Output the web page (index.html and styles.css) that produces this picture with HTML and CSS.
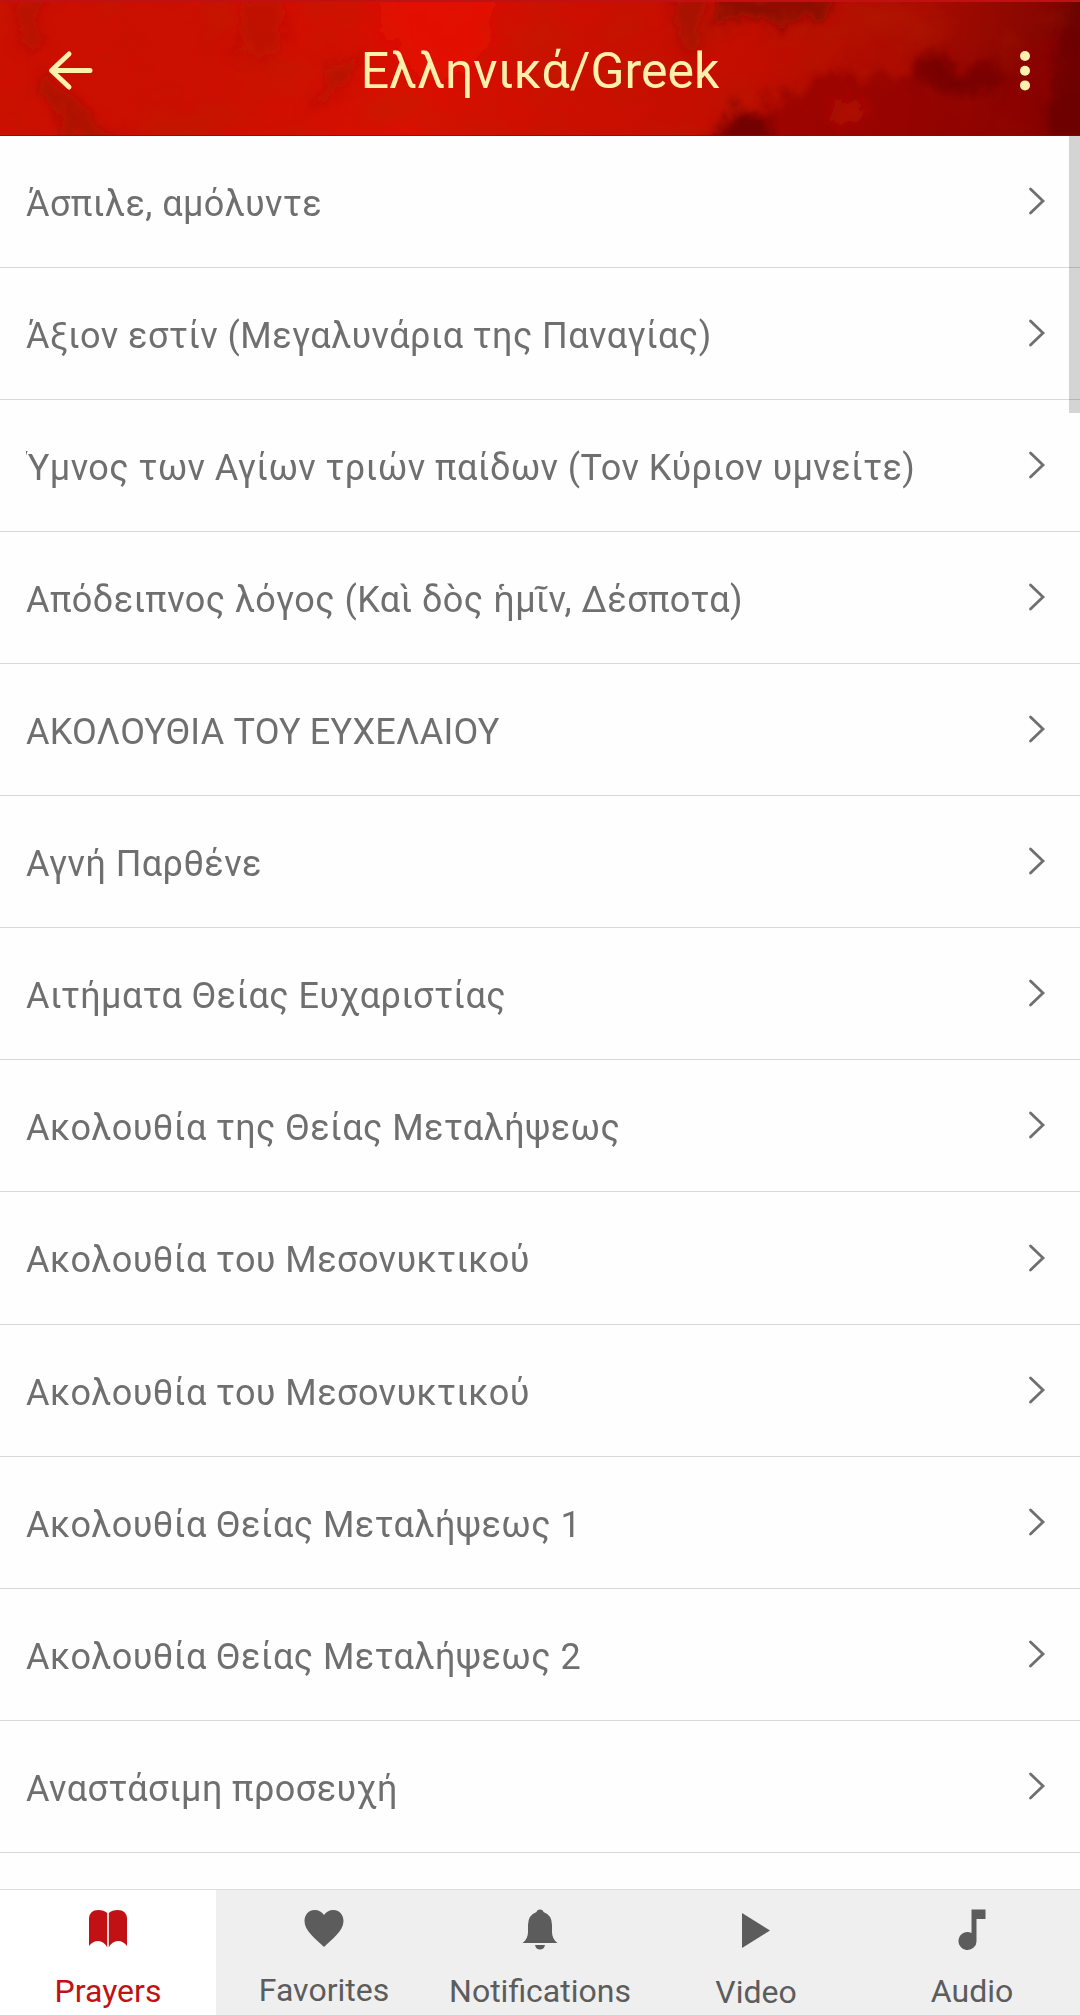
FILE: index.html
```html
<!DOCTYPE html>
<html lang="el">
<head>
<meta charset="utf-8">
<title>Ελληνικά/Greek</title>
<link rel="stylesheet" href="styles.css">
</head>
<body>
<div class="app">
  <header class="topbar">
    <svg class="topbar-texture" viewBox="0 0 1080 136" preserveAspectRatio="none" aria-hidden="true">
      <defs>
        <linearGradient id="base" x1="0" x2="1" y1="0" y2="0.02">
          <stop offset="0" stop-color="#cc0f00"/>
          <stop offset="0.2" stop-color="#cb0f00"/>
          <stop offset="0.4" stop-color="#d81000"/>
          <stop offset="0.52" stop-color="#cd0f00"/>
          <stop offset="0.7" stop-color="#c20e00"/>
          <stop offset="0.85" stop-color="#aa0b00"/>
          <stop offset="1" stop-color="#7c0600"/>
        </linearGradient>
        <filter id="paint" x="-10%" y="-30%" width="120%" height="160%">
          <feTurbulence type="fractalNoise" baseFrequency="0.035 0.03" numOctaves="4" seed="8" result="n"/>
          <feGaussianBlur in="SourceGraphic" stdDeviation="7" result="b"/>
          <feDisplacementMap in="b" in2="n" scale="36" xChannelSelector="R" yChannelSelector="G"/>
        </filter>
        <filter id="mottle" x="0" y="0" width="100%" height="100%">
          <feTurbulence type="fractalNoise" baseFrequency="0.014 0.02" numOctaves="4" seed="21"/>
          <feColorMatrix values="0 0 0 0 0.45  0 0 0 0 0.02  0 0 0 0 0  1.6 0 0 0 -0.72"/>
        </filter>
      </defs>
      <rect width="1080" height="136" fill="url(#base)"/>
      <rect width="1080" height="136" filter="url(#mottle)" opacity="0.5"/>
      <g filter="url(#paint)">
        <path d="M375 -10H505L480 60 440 80 400 50Z" fill="#e61400" opacity=".8"/>
        <path d="M25 0H48L40 40 20 55Z" fill="#a80c00" opacity=".6"/>
        <path d="M40 70 75 100 120 140H70L45 100Z" fill="#9c0b00" opacity=".6"/>
        <path d="M325 70 360 55 345 90 310 110Z" fill="#a80c00" opacity=".6"/>
        <path d="M240 0H285L280 50 240 60Z" fill="#b60d00" opacity=".6"/>
        <path d="M675 -10H702L705 40 690 55 678 30Z" fill="#9c0b00" opacity=".7"/>
        <path d="M722 -10H840L830 12 780 24 740 20 718 28Z" fill="#860900" opacity=".9"/>
        <path d="M700 150 730 108 790 98 840 70 870 84 900 70 930 50 960 60 1010 65 1080 20V150H700Z" fill="#8c0900" opacity=".65"/>
        <path d="M725 118 760 110 780 150H715Z" fill="#600400" opacity=".7"/>
        <path d="M915 62 940 52 965 75 1010 65 1000 90 960 95 920 80Z" fill="#660500" opacity=".6"/>
        <path d="M820 105 850 95 870 115 855 125Z" fill="#bb0d00" opacity=".7"/>
        <path d="M1065 -10H1110V150H1040L1055 60Z" fill="#620400" opacity=".65"/>
      </g>
      <rect width="1080" height="2" fill="#c01012"/>
      <rect y="135" width="1080" height="1" fill="#8a0a00" opacity=".7"/>
    </svg>
    <svg class="back" viewBox="0 0 48 44"><path d="M43 21.500H5M22 5 4.500 21.500 22 38" /></svg>
    <h1 class="title">Ελληνικά/Greek</h1>
    <svg class="more" viewBox="0 0 10 40"><circle cx="5" cy="5" r="5"/><circle cx="5" cy="19.700" r="5"/><circle cx="5" cy="34.400" r="5"/></svg>
  </header>
  <main class="list">
    <svg class="defs" aria-hidden="true"><symbol id="chev" viewBox="0 0 18 28"><path d="M2.500 2 15 14 2.500 26"/></symbol></svg>
    <a class="row"><span>Άσπιλε, αμόλυντε</span><svg class="chev"><use href="#chev"/></svg></a>
    <a class="row"><span>Άξιον εστίν (Μεγαλυνάρια της Παναγίας)</span><svg class="chev"><use href="#chev"/></svg></a>
    <a class="row"><span>Ύμνος των Αγίων τριών παίδων (Τον Κύριον υμνείτε)</span><svg class="chev"><use href="#chev"/></svg></a>
    <a class="row"><span>Απόδειπνος λόγος (Καὶ δὸς ἡμῖν, Δέσποτα)</span><svg class="chev"><use href="#chev"/></svg></a>
    <a class="row caps"><span>ΑΚΟΛΟΥΘΙΑ ΤΟΥ ΕΥΧΕΛΑΙΟΥ</span><svg class="chev"><use href="#chev"/></svg></a>
    <a class="row"><span>Αγνή Παρθένε</span><svg class="chev"><use href="#chev"/></svg></a>
    <a class="row"><span>Αιτήματα Θείας Ευχαριστίας</span><svg class="chev"><use href="#chev"/></svg></a>
    <a class="row"><span>Ακολουθία της Θείας Μεταλήψεως</span><svg class="chev"><use href="#chev"/></svg></a>
    <a class="row tall"><span>Ακολουθία του Μεσονυκτικού</span><svg class="chev"><use href="#chev"/></svg></a>
    <a class="row"><span>Ακολουθία του Μεσονυκτικού</span><svg class="chev"><use href="#chev"/></svg></a>
    <a class="row"><span>Ακολουθία Θείας Μεταλήψεως 1</span><svg class="chev"><use href="#chev"/></svg></a>
    <a class="row"><span>Ακολουθία Θείας Μεταλήψεως 2</span><svg class="chev"><use href="#chev"/></svg></a>
    <a class="row"><span>Αναστάσιμη προσευχή</span><svg class="chev"><use href="#chev"/></svg></a>
    <div class="scrollbar"></div>
  </main>
  <nav class="tabs">
    <a class="tab active"><svg class="icon" viewBox="0 0 44 44"><path d="M3 11Q4 3 12 3Q18 3 21.200 6V40.500Q18 34 12 34Q7 34 3 39ZM22.800 6Q26 3 32 3Q40 3 41 11V39Q37 34 32 34Q26 34 22.800 40.500Z"/></svg><span>Prayers</span></a>
    <a class="tab favorites"><svg class="icon" viewBox="0 0 44 44"><path d="M22 40C14 32 2.500 24 2.500 14C2.500 7.500 7 3 12.500 3C17 3 20 5 22 8C24 5 27 3 31.500 3C37 3 41.500 7.500 41.500 14C41.500 24 30 32 22 40Z"/></svg><span>Favorites</span></a>
    <a class="tab"><svg class="icon" viewBox="0 0 44 44"><path d="M4.500 36Q10 32 10 25V18Q10 8 18.500 5Q19 2.500 22 2.500Q25 2.500 25.500 5Q34 8 34 18V25Q34 32 39.500 36ZM17 38H27Q26 42.500 22 42.500Q18 42.500 17 38Z"/></svg><span>Notifications</span></a>
    <a class="tab video"><svg class="icon" viewBox="0 0 44 44"><path d="M8 6V41L36 23.500Z"/></svg><span>Video</span></a>
    <a class="tab"><svg class="icon" viewBox="0 0 44 44"><path d="M21.500 2.500H35.500V12H26.500V33.500A9 9 0 1 1 21.500 26Z"/></svg><span>Audio</span></a>
  </nav>
</div>
</body>
</html>
```
FILE: styles.css
```css
* { box-sizing: border-box; }
body { margin: 0; background: #fefefe; font-family: Roboto, "Noto Sans", sans-serif; }
.app { display: flex; flex-direction: column; width: 1080px; height: 2015px; overflow: hidden; }

.topbar { position: relative; flex: none; display: grid; grid-template-columns: 100px 1fr 100px; align-items: center; height: 136px; padding: 0 50px 0 47px; overflow: hidden; background: #c80f00; }
.topbar-texture { position: absolute; inset: 0; width: 1080px; height: 136px; }
.back { position: relative; width: 48px; height: 44px; margin-top: 5px; fill: none; stroke: #fff0ad; stroke-width: 5; stroke-linecap: round; stroke-linejoin: round; }
.title { position: relative; margin: 5px 0 0 3px; font-size: 50px; font-weight: 400; line-height: 60px; color: #fff0ad; text-align: center; white-space: nowrap; }
.more { position: relative; justify-self: end; width: 10px; height: 40px; margin-top: 5px; fill: #fff0ad; }

.list { position: relative; flex: 1; min-height: 0; overflow: hidden; }
.defs { display: none; }
.row { display: flex; align-items: center; justify-content: space-between; height: 132px; padding: 4px 34px 0 26px; border-bottom: 1px solid #d8d8d8; font-size: 36px; line-height: 44px; letter-spacing: .44px; color: #6f6f6f; white-space: nowrap; }
.row span { overflow: hidden; }
.row.caps { letter-spacing: .2px; }
.row.tall { height: 133px; }
.chev { width: 18px; height: 28px; margin-top: -5px; fill: none; stroke: #6f6f6f; stroke-width: 2.800; stroke-linecap: round; }
.scrollbar { position: absolute; top: 0; right: 0; width: 11px; height: 277px; background: rgba(0, 0, 0, .165); }

.tabs { flex: none; display: grid; grid-template-columns: repeat(5, 1fr); height: 126px; border-top: 1px solid #dcdcdc; background: #efefef; }
.tab { display: flex; flex-direction: column; align-items: center; padding-top: 17px; color: #5c5c5c; font-size: 32px; line-height: 40px; }
.tab span { margin-top: 20px; }
.tab.active { background: #fff; color: #c11115; }
.tab.favorites span { margin-top: 19px; }
.tab.video span { margin-top: 21px; }
.icon { width: 44px; height: 44px; fill: currentColor; }
```
